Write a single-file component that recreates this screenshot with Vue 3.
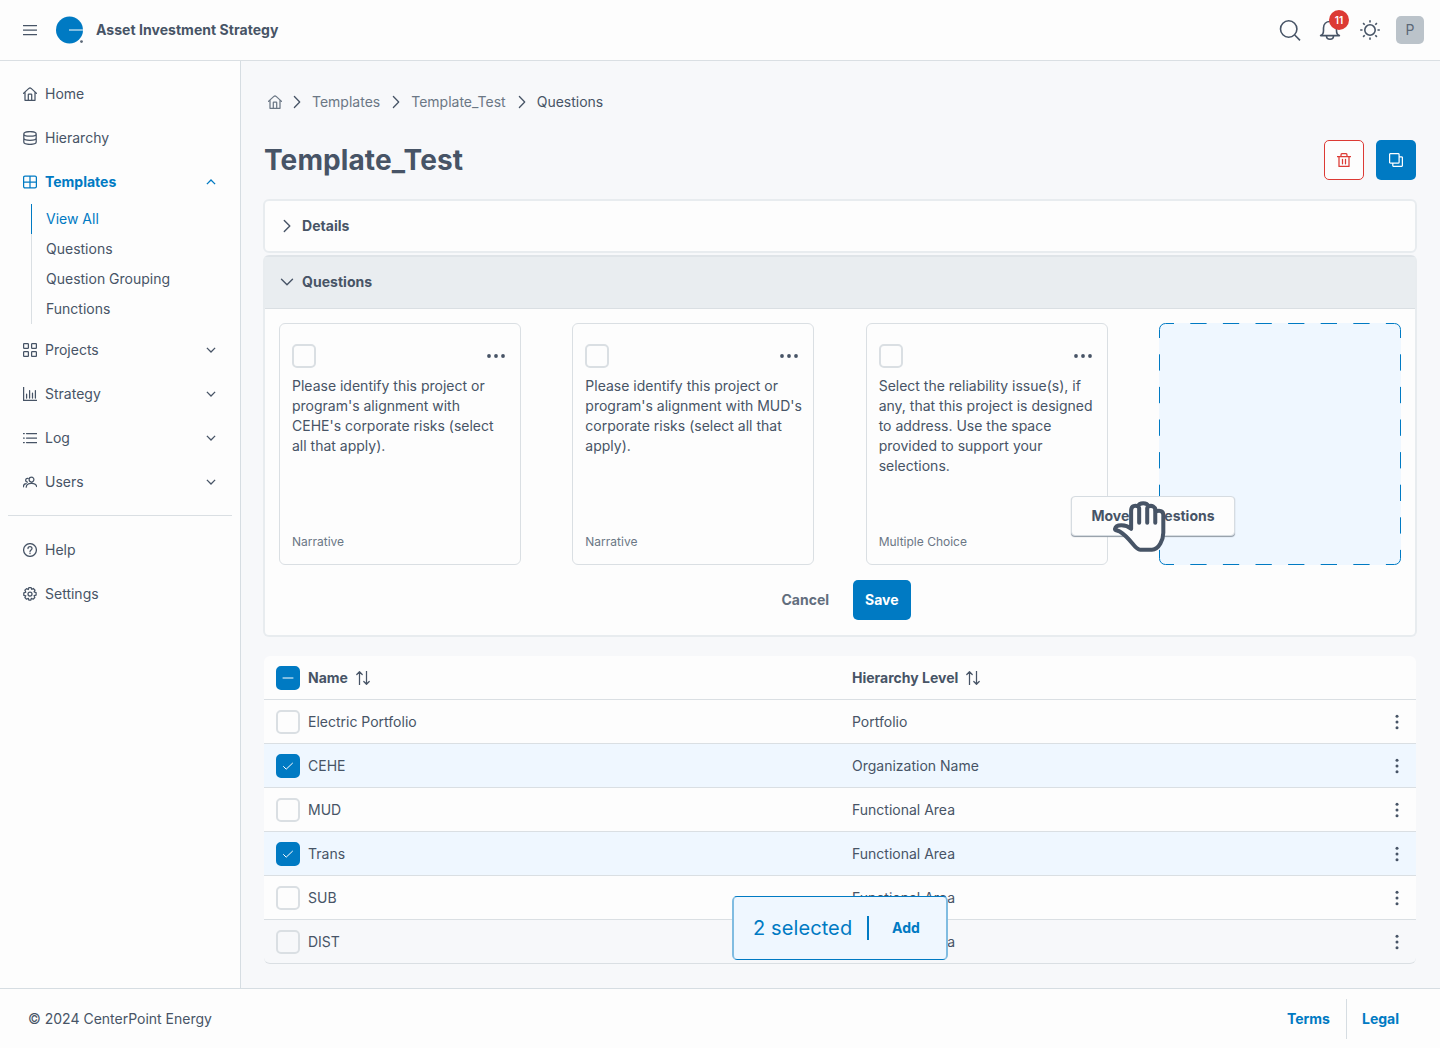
<template>
    <div class="app">
        <header class="header">
            <svg class="menu" viewBox="0 0 14 14"><path d="M.5 2.500h13M.5 7h13M.5 11.500h13" /></svg>
            <svg class="logo" viewBox="0 0 28 28">
                <circle class="logo-disc" cx="13.500" cy="14" r="13.500" />
                <path class="logo-bar" d="M13 14h14" />
                <circle class="logo-dot" cx="25.500" cy="25.600" r="1.400" />
            </svg>
            <div class="brand">Asset Investment Strategy</div>
            <div class="tools">
                <svg class="tool" viewBox="0 0 24 24"><circle cx="10.700" cy="11" r="8.200" /><path d="M16.700 17l5.300 5.400" /></svg>
                <div class="bell">
                    <svg class="tool" viewBox="0 0 24 24">
                        <path d="M2.600 17.600c2.200-.8 2.900-2.600 2.900-5.200V10c0-3.800 2.600-6.500 6.500-6.500s6.500 2.700 6.500 6.500v2.400c0 2.600.7 4.400 2.900 5.200z" />
                        <path d="M8.500 18c0 4.400 7 4.400 7 0" />
                    </svg>
                    <span class="badge">11</span>
                </div>
                <svg class="tool" viewBox="0 0 24 24">
                    <circle cx="12" cy="12" r="5.200" />
                    <path d="M12 2.200v2.300M12 19.500v2.300M2.200 12h2.300M19.500 12h2.300M5.100 5.100l1.600 1.600M17.300 17.300l1.600 1.600M5.100 18.900l1.600-1.600M17.300 6.700l1.600-1.600" />
                </svg>
                <div class="avatar">P</div>
            </div>
        </header>

        <div class="body">
            <nav class="sidebar">
                <template v-for="item in menu" :key="item.label">
                    <hr v-if="item.divider" class="divider" />
                    <div class="nav-item" :class="{ active: item.children }">
                        <svg class="icon" viewBox="0 0 14 14"><path :d="icons[item.icon]" /></svg>
                        <span>{{ item.label }}</span>
                        <svg v-if="item.expandable" class="caret" viewBox="0 0 10 6">
                            <path :d="item.children ? 'M.9 5.100L5 1l4.100 4.100' : 'M.9.9L5 5 9.100.9'" />
                        </svg>
                    </div>
                    <div v-if="item.children" class="sub">
                        <div v-for="(child, i) in item.children" :key="child" class="sub-item" :class="{ current: i === 0 }">{{ child }}</div>
                    </div>
                </template>
            </nav>

            <main class="main">
                <div class="crumbs">
                    <svg class="icon" viewBox="0 0 14 14"><path :d="icons.home" /></svg>
                    <template v-for="(crumb, i) in crumbs" :key="crumb">
                        <svg class="crumb-sep" viewBox="0 0 8 14"><path d="M1.400 1.500L6.700 7l-5.300 5.500" /></svg>
                        <span :class="{ here: i === crumbs.length - 1 }">{{ crumb }}</span>
                    </template>
                </div>

                <div class="title-row">
                    <h1>Template_Test</h1>
                    <div class="actions">
                        <button class="icon-btn danger">
                            <svg class="icon" viewBox="0 0 14 14"><path d="M.5 3.500h13M4 3.300V1.900c0-.8.500-1.300 1.300-1.300h3.400c.8 0 1.300.5 1.300 1.300v1.400M2 3.700v9.700h10V3.700M5.500 6.300v4.500M8.500 6.300v4.500" /></svg>
                        </button>
                        <button class="icon-btn primary">
                            <svg class="icon" viewBox="0 0 14 14"><path d="M1.500.6h7.700q.9 0 .9.900v7.700q0 .9-.9.900H1.500q-.9 0-.9-.9V1.500q0-.9.900-.9zM10.500 3.800h2q.9 0 .9.900v7.800q0 .9-.9.900H4.700q-.9 0-.9-.9v-2" /></svg>
                        </button>
                    </div>
                </div>

                <section class="panel">
                    <div class="panel-head">
                        <svg class="panel-caret" viewBox="0 0 14 14"><path d="M4.300 1.500L9.800 7l-5.500 5.500" /></svg>
                        Details
                    </div>
                </section>

                <section class="panel questions">
                    <div class="panel-head open">
                        <svg class="panel-caret" viewBox="0 0 14 14"><path d="M1.500 4.300L7 9.800l5.500-5.500" /></svg>
                        Questions
                    </div>
                    <div class="panel-body">
                        <div class="cards">
                            <article v-for="card in cards" :key="card.text" class="card">
                                <div class="card-top">
                                    <span class="check"></span>
                                    <svg class="dots" viewBox="0 0 18 4"><circle cx="2" cy="2" r="1.900" /><circle cx="9" cy="2" r="1.900" /><circle cx="16" cy="2" r="1.900" /></svg>
                                </div>
                                <p>{{ card.text }}</p>
                                <div class="card-type">{{ card.type }}</div>
                            </article>
                            <div class="drop">
                                <svg class="drop-outline" viewBox="0 0 242 242">
                                    <path d="M.5 15V6.500a6 6 0 0 1 6-6H15M227 .5h8.500a6 6 0 0 1 6 6V15M241.500 227v8.500a6 6 0 0 1-6 6H227M15 241.500H6.500a6 6 0 0 1-6-6V227" />
                                    <path class="dashes" d="M15 .5h212M241.500 15v212M15 241.500h212M.5 15v212" />
                                </svg>
                                <div class="drag-label">Move 2 Questions</div>
                                <svg class="hand" viewBox="186 92 164 158">
                                    <path d="M243 178V124c0-16 13-16 20-13 5-12 27-12 32 0 9-4 21 0 22 15 10-4 22-2 22 10v54c0 18-12 50-34 50h-35c-18 0-24-31-61-54-8-4-15-3-14-8 3-15 32-14 48 0z" />
                                    <path d="M267 116v44M291 116v44M315 122v38" />
                                </svg>
                            </div>
                        </div>
                        <div class="buttons">
                            <button class="btn">Cancel</button>
                            <button class="btn save">Save</button>
                        </div>
                    </div>
                </section>

                <div class="table">
                    <div class="row head">
                        <span class="check on"><svg class="mark" viewBox="0 0 12 12"><path d="M1 6h10" /></svg></span>
                        <div class="cell name">Name <svg class="icon" viewBox="0 0 14 14"><path :d="icons.sort" /></svg></div>
                        <div class="cell">Hierarchy Level <svg class="icon" viewBox="0 0 14 14"><path :d="icons.sort" /></svg></div>
                    </div>
                    <div v-for="row in rows" :key="row.name" class="row" :class="{ selected: row.selected }">
                        <span class="check" :class="{ on: row.selected }">
                            <svg v-if="row.selected" class="mark" viewBox="0 0 12 12"><path d="M1.500 6.500l2.700 2.700 6.300-6" /></svg>
                        </span>
                        <div class="cell name">{{ row.name }}</div>
                        <div class="cell">{{ row.level }}</div>
                        <svg class="kebab" viewBox="0 0 4 16"><circle cx="2" cy="2.300" r="1.500" /><circle cx="2" cy="8" r="1.500" /><circle cx="2" cy="13.700" r="1.500" /></svg>
                    </div>
                    <div class="toast">
                        <span class="count">{{ selectedCount }} selected</span>
                        <span class="bar"></span>
                        <span class="add">Add</span>
                    </div>
                </div>
            </main>
        </div>

        <footer class="footer">
            <span>© 2024 CenterPoint Energy</span>
            <div class="links">
                <a>Terms</a>
                <a>Legal</a>
            </div>
        </footer>
    </div>
</template>

<script setup>
import { ref, computed } from 'vue'

const icons = {
    home: 'M.4 6.400L5.900 1.400q1.100-.9 2.200 0l5.500 5M2 5.200v8.100h10V5.200M5.300 13.300V7.600q0-.6.600-.6h2.200q.6 0 .6.600v5.700',
    database: 'M.8 2.900C.8-.2 13.200-.2 13.200 2.900v8.200c0 3.100-12.400 3.100-12.400 0zM.8 2.900c0 3 12.400 3 12.400 0M.8 7c0 3.100 12.400 3.100 12.400 0',
    table: 'M2 1.200h10q1.400 0 1.400 1.400v8.800q0 1.400-1.400 1.400H2q-1.400 0-1.400-1.400V2.600q0-1.400 1.400-1.400zM.6 7h12.800M7 1.200v11.600',
    grid: 'M1.300.6h3.400q.7 0 .7.700v3.400q0 .7-.7.700H1.300q-.7 0-.7-.7V1.300q0-.7.7-.7zM9.300.6h3.400q.7 0 .7.700v3.400q0 .7-.7.700H9.300q-.7 0-.7-.7V1.300q0-.7.7-.7zM1.300 8.600h3.400q.7 0 .7.700v3.400q0 .7-.7.700H1.300q-.7 0-.7-.7V9.300q0-.7.7-.7zM9.300 8.600h3.400q.7 0 .7.700v3.400q0 .7-.7.700H9.300q-.7 0-.7-.7V9.300q0-.7.7-.7z',
    chart: 'M.6 0v13.400H14M3.600 11V7.200M6.600 11V3.600M9.500 11V6.200M12.400 11V3.600',
    list: 'M3.500 2.500H14M3.500 7H14M3.500 11.500H14M.3 2.500h1M.3 7h1M.3 11.500h1',
    users: 'M8.500 2.200a2.400 2.400 0 1 1 0 4.800 2.400 2.400 0 0 1 0-4.800M3.200 12.200c.4-4.800 9.500-4.900 10.500-.7M4.900 3.300C2.400 2.900 1.700 6.600 4.400 7.100M.4 11.800c0-2 1.100-3.200 2.800-3.200',
    help: 'M7 .6a6.400 6.400 0 1 1 0 12.800A6.400 6.400 0 0 1 7 .6M5 5.500c0-2.700 4-2.500 4-.1C9 6.900 7 6.900 7 8.600M7 10.200v.3',
    settings: 'M5.800.7h2.400l.5 1.700 1.600-.9 1.700 1.700-.9 1.700 2 .7v2.500l-2 .5.700 1.900-1.700 1.700-1.700-.9-.5 1.700H5.800l-.5-1.700-1.700.9-1.700-1.700.9-1.700-2-.5V5.900l2-.7-.9-1.900 1.700-1.700 1.700.9zM7 5a2 2 0 1 1 0 4 2 2 0 0 1 0-4',
    sort: 'M3.500 13.800V.8M.8 3.500L3.500.7l2.700 2.800M10.500.2v13M7.800 10.500l2.700 2.800 2.700-2.800'
}

const menu = [
    { label: 'Home', icon: 'home' },
    { label: 'Hierarchy', icon: 'database' },
    { label: 'Templates', icon: 'table', expandable: true, children: ['View All', 'Questions', 'Question Grouping', 'Functions'] },
    { label: 'Projects', icon: 'grid', expandable: true },
    { label: 'Strategy', icon: 'chart', expandable: true },
    { label: 'Log', icon: 'list', expandable: true },
    { label: 'Users', icon: 'users', expandable: true },
    { label: 'Help', icon: 'help', divider: true },
    { label: 'Settings', icon: 'settings' }
]

const crumbs = ['Templates', 'Template_Test', 'Questions']

const cards = [
    { text: "Please identify this project or program's alignment with CEHE's corporate risks (select all that apply).", type: 'Narrative' },
    { text: "Please identify this project or program's alignment with MUD's corporate risks (select all that apply).", type: 'Narrative' },
    { text: 'Select the reliability issue(s), if any, that this project is designed to address. Use the space provided to support your selections.', type: 'Multiple Choice' }
]

const rows = ref([
    { name: 'Electric Portfolio', level: 'Portfolio', selected: false },
    { name: 'CEHE', level: 'Organization Name', selected: true },
    { name: 'MUD', level: 'Functional Area', selected: false },
    { name: 'Trans', level: 'Functional Area', selected: true },
    { name: 'SUB', level: 'Functional Area', selected: false },
    { name: 'DIST', level: 'Functional Area', selected: false }
])

const selectedCount = computed(() => rows.value.filter(row => row.selected).length)
</script>

<style>
body {
    background: #f7f8fa;
}
</style>

<style scoped>
.app {
    display: flex;
    flex-direction: column;
    height: 1048px;
    font-family: Inter, sans-serif;
    font-size: 14px;
    line-height: 20px;
    color: #475466;
}

.app * {
    box-sizing: border-box;
}

svg {
    display: block;
    flex: none;
    fill: none;
    stroke: currentColor;
    stroke-width: 1.25;
    stroke-linecap: round;
    stroke-linejoin: round;
}

button {
    padding: 0;
    border: 0;
    background: none;
    color: inherit;
    font: inherit;
}

.icon {
    width: 14px;
    height: 14px;
}

/* header */
.header {
    display: flex;
    align-items: center;
    flex: none;
    height: 61px;
    padding: 0 16px 1px 23px;
    background: #fdfdfd;
    box-shadow: inset 0 -1px #dadfe3;
}

.menu {
    width: 14px;
    height: 14px;
}

.logo {
    width: 28px;
    height: 28px;
    margin-left: 19px;
}

.logo-disc {
    fill: #007ac3;
    stroke: none;
}

.logo-bar {
    stroke: #80bde1;
    stroke-width: 2;
    stroke-linecap: butt;
}

.logo-dot {
    fill: #5c6877;
    stroke: none;
}

.brand {
    margin-left: 12px;
    font-weight: 700;
    letter-spacing: 0.04px;
}

.tools {
    display: flex;
    align-items: center;
    gap: 16px;
    margin-left: auto;
}

.tool {
    width: 24px;
    height: 24px;
    stroke-width: 1.6;
    stroke-linecap: butt;
}

.bell {
    position: relative;
}

.badge {
    position: absolute;
    top: -8px;
    left: 11px;
    width: 20px;
    height: 20px;
    border-radius: 50%;
    background: #dc3a34;
    color: #fff;
    font-size: 10px;
    font-weight: 600;
    text-align: center;
}

.avatar {
    width: 28px;
    height: 28px;
    margin-left: -2px;
    border-radius: 5px;
    background: #bbc3ca;
    color: #5c6877;
    line-height: 28px;
    text-align: center;
}

/* layout */
.body {
    display: flex;
    flex: 1;
    min-height: 0;
}

.sidebar {
    flex: none;
    width: 241px;
    padding: 11px 8px 0;
    border-right: 1px solid #d6dde2;
    background: #fdfdfd;
}

.nav-item {
    display: flex;
    align-items: center;
    gap: 8px;
    height: 44px;
    padding: 0 16px 0 15px;
}

.nav-item.active {
    color: #007ac3;
    font-weight: 700;
}

.caret {
    width: 10px;
    height: 6px;
    margin-left: auto;
    stroke-width: 1.3;
    stroke-linecap: butt;
    stroke-linejoin: miter;
}

.sub {
    margin-left: 23px;
}

.sub-item {
    height: 30px;
    padding-left: 14px;
    border-left: 1px solid #dadfe3;
    line-height: 30px;
}

.sub-item.current {
    border-color: #007ac3;
    color: #007ac3;
}

.sub + .nav-item {
    margin-top: 4px;
}

.divider {
    height: 1px;
    margin: 11px 0 12px;
    border: 0;
    background: #dadfe3;
}

.main {
    flex: 1;
    padding: 31px 23px 0 22px;
}

/* breadcrumbs and title */
.crumbs {
    display: flex;
    align-items: center;
    height: 20px;
    padding-left: 5px;
    color: #6b7785;
}

.crumb-sep {
    width: 8px;
    height: 14px;
    margin: 0 11px 0 12px;
    stroke-width: 1.3;
    color: #475466;
}

.crumbs .icon + .crumb-sep {
    margin-left: 11px;
}

.here {
    color: #475466;
}

.title-row {
    display: flex;
    align-items: center;
    justify-content: space-between;
    height: 40px;
    margin: 28px 1px 19px;
}

h1 {
    margin: 0;
    font-size: 28px;
    font-weight: 700;
    line-height: 40px;
    letter-spacing: 0.1px;
}

.actions {
    display: flex;
    gap: 12px;
}

.icon-btn {
    display: flex;
    align-items: center;
    justify-content: center;
    width: 40px;
    height: 40px;
    border-radius: 5px;
}

.danger {
    border: 1px solid #dc3a34;
    background: #fdfdfd;
    color: #dc3a34;
}

.primary {
    background: #007ac3;
    color: #fff;
}

/* panels */
.panel {
    margin-bottom: 2px;
    border: 2px solid #e8ecef;
    border-radius: 6px;
    background: #fdfdfd;
}

.panel-head {
    display: flex;
    align-items: center;
    gap: 8px;
    height: 50px;
    padding-left: 15px;
    font-weight: 700;
    letter-spacing: 0.04px;
}

.panel-head.open {
    height: 52px;
    padding-bottom: 1px;
    border-bottom: 1px solid #dadfe3;
    background: #e9edf0;
}

.panel.questions {
    height: 382px;
    border-top-color: #dfe4e8;
}

.panel-caret {
    width: 14px;
    height: 14px;
    stroke-width: 1.4;
}

.panel-body {
    padding: 14px 14px 0;
}

.cards {
    display: flex;
    justify-content: space-between;
}

.card {
    display: flex;
    flex-direction: column;
    width: 242px;
    height: 242px;
    padding: 20px 11px 11px 12px;
    border: 1px solid #dadfe3;
    border-radius: 6px;
}

.card-top {
    display: flex;
    align-items: center;
    justify-content: space-between;
    height: 24px;
    padding-right: 4px;
}

.dots {
    width: 18px;
    height: 4px;
    fill: currentColor;
    stroke: none;
}

.card p {
    margin: 8px 0 0;
}

.card-type {
    margin-top: auto;
    margin-bottom: 1px;
    color: #6b7785;
    font-size: 12px;
}

.check {
    display: flex;
    align-items: center;
    justify-content: center;
    flex: none;
    width: 24px;
    height: 24px;
    border: 2px solid #dadfe3;
    border-radius: 5px;
}

.check.on {
    border-color: #007ac3;
    background: #007ac3;
    color: #fff;
}

.mark {
    width: 12px;
    height: 12px;
    stroke-width: 1;
}

/* drop target with the dragged label over it */
.drop {
    position: relative;
    width: 242px;
    height: 242px;
    border-radius: 6px;
    background: #eff7ff;
}

.drop-outline {
    width: 242px;
    height: 242px;
    stroke: #007ac3;
    stroke-width: 1;
    stroke-linecap: butt;
}

.dashes {
    stroke-dasharray: 16.3 16.3;
    stroke-dashoffset: 16.3;
}

.drag-label {
    position: absolute;
    top: 173px;
    left: -88px;
    width: 164px;
    height: 40px;
    border: 1px solid #d6dce1;
    border-radius: 4px;
    background: #fdfdfd;
    box-shadow: 0 1px 1px #8f99a4;
    font-weight: 700;
    line-height: 38px;
    text-align: center;
}

.hand {
    position: absolute;
    top: 177px;
    left: -47px;
    width: 55px;
    height: 53px;
    fill: #fdfdfd;
    stroke-width: 12;
}

.buttons {
    display: flex;
    justify-content: center;
    gap: 12px;
    margin-top: 15px;
}

.btn {
    height: 40px;
    padding: 0 12px;
    border-radius: 5px;
    color: #626e7d;
    font-weight: 700;
}

.save {
    background: #007ac3;
    color: #fff;
}

/* table */
.table {
    position: relative;
    margin: 19px 1px 0;
}

.row {
    display: flex;
    align-items: center;
    gap: 8px;
    height: 44px;
    padding: 0 17px 0 12px;
    border-bottom: 1px solid #dadfe3;
    background: #fdfdfd;
}

.row.head {
    border-radius: 6px 6px 0 0;
    font-weight: 700;
}

.row.selected {
    background: #eff7ff;
}

.row:nth-last-child(2) {
    border-radius: 0 0 6px 6px;
    background: #f7f8fa;
}

.cell {
    display: flex;
    align-items: center;
    gap: 8px;
}

.name {
    width: 536px;
}

.kebab {
    width: 4px;
    height: 16px;
    margin-left: auto;
    fill: currentColor;
    stroke: none;
}

.toast {
    position: absolute;
    top: 240px;
    left: 468px;
    display: flex;
    align-items: center;
    width: 216px;
    height: 64px;
    padding: 0 19px;
    border: solid;
    border-width: 1px 2px;
    border-color: #007ac3 #80bce1;
    border-radius: 5px;
    background: #eff7ff;
    color: #007ac3;
}

.count {
    width: 99px;
    font-size: 20px;
    letter-spacing: 0.1px;
    white-space: nowrap;
}

.bar {
    width: 2px;
    height: 24px;
    margin: 0 23px 0 15px;
    background: #007ac3;
}

.add {
    font-weight: 700;
}

/* footer */
.footer {
    display: flex;
    align-items: center;
    justify-content: space-between;
    flex: none;
    height: 60px;
    padding: 0 26px 0 28px;
    border-top: 1px solid #d6dde2;
    background: #fdfdfd;
}

.links {
    display: flex;
    line-height: 40px;
    font-weight: 700;
    color: #007ac3;
}

.links a {
    padding: 0 15px 0 16px;
}

.links a + a {
    padding-left: 15px;
    border-left: 1px solid #d6dde2;
}

.links a:first-child {
    padding-right: 16px;
}
</style>
